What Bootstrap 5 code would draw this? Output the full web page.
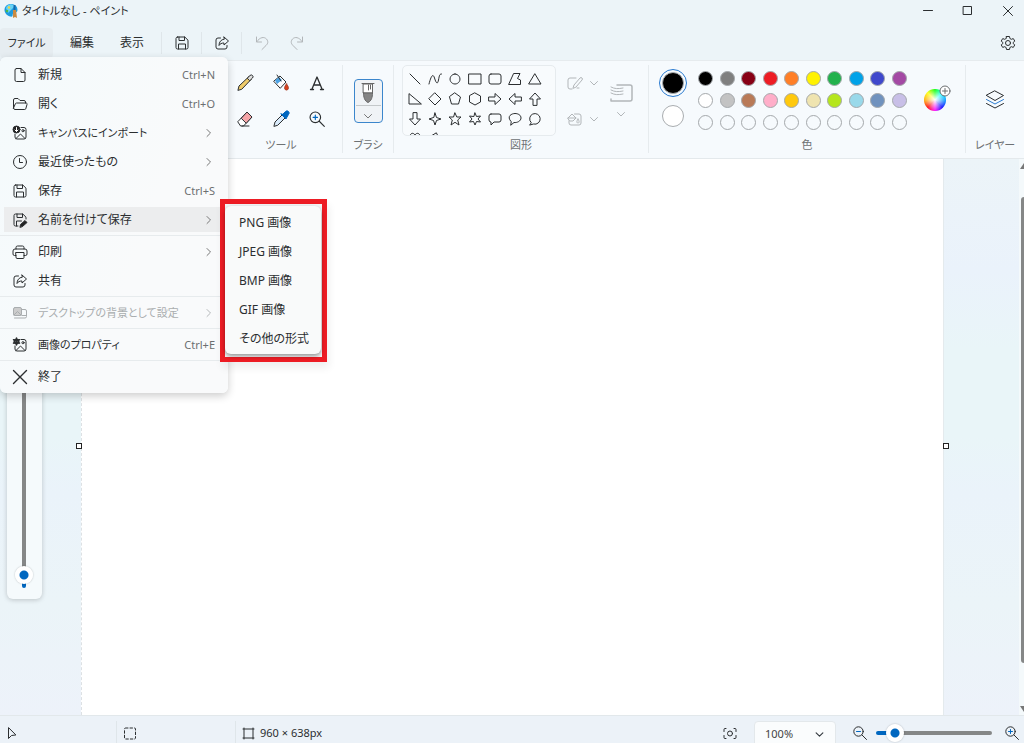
<!DOCTYPE html>
<html lang="ja">
<head>
<meta charset="utf-8">
<meta name="viewport" content="width=device-width, initial-scale=1">
<title>タイトルなし - ペイント</title>
<link href="https://cdn.jsdelivr.net/npm/bootstrap@5.3.0/dist/css/bootstrap.min.css" rel="stylesheet">
<style>
  body { font-family: "Noto Sans", "Noto Sans CJK JP", sans-serif; font-size: 12px; line-height: 16px; color: #2b2e30; background: #ecf4f8; overflow: hidden; }
  body, button, select { font-feature-settings: "palt"; white-space: nowrap; }
  svg { fill: none; stroke: currentColor; stroke-linecap: round; stroke-linejoin: round; flex: none; display: block; }
  .logo { stroke: none; }
  .kana { font-size: 11px; }
  .i16 { width: 16px; height: 16px; }
  .i12 { width: 12px; height: 12px; }
  .plain { border: 0; background: none; padding: 0; color: inherit; display: flex; align-items: center; justify-content: center; }
  .titlebar { height: 22px; }
  .win { width: 32px; height: 22px; }
  .menubar { height: 38px; padding-top: 4px; }
  .menubar .plain { height: 30px; }
  .w-text { width: 50px; }
  .menubar .w-file { width: 53px; background: #e6edf1; border-radius: 4px; }
  .w-icon { width: 39px; }
  .w-undo { width: 32px; }
  .vline { width: 1px; height: 22px; background: #dfe6ea; }
  .ribbon { height: 99px; background: #f6fafd; border-top: 1px solid #e6ebee; border-bottom: 1px solid #e4e9ec; padding-top: 4px; padding-bottom: 5px; }
  .group { border-right: 1px solid #e6ebee; display: flex; flex-direction: column; align-items: center; justify-content: space-between; flex: none; }
  .group-name { color: #6d7174; font-size: 11px; line-height: 16px; }
  .g-image { width: 220px; border: 0; }
  .g-tools { width: 123px; }
  .g-brush { width: 51px; }
  .g-shapes { width: 255px; }
  .g-colors { width: 317px; flex-grow: 1; }
  .color-row { padding-left: 6px; }
  .g-layers { width: 58px; border: 0; }
  .tools { display: grid; grid-template-columns: repeat(3, 36px); grid-auto-rows: 36px; }
  .tools svg { width: 18px; height: 18px; }
  .brush { width: 29px; height: 44px; margin-top: 14px; border: 1px solid #3b86cc; border-radius: 4px; background: #f0f3f6; flex-direction: column; }
  .brush .chev { border-top: 1px solid #c4c8ca; width: 25px; color: #777; }
  .shapes { width: 154px; height: 71px; border: 1px solid #e6ebee; border-radius: 5px; padding: 3px 2px; overflow: hidden; display: grid; grid-template-columns: repeat(7, 20px); grid-auto-rows: 20px; align-content: start; background: #f8fbfd; }
  .outline-tools { margin-left: 10px; }
  .dim { color: #b2b6b9; }
  .ring { width: 28px; height: 28px; border: 1px solid #2a7ad0; border-radius: 50%; }
  .big { width: 22px; height: 22px; border-radius: 50%; border: 1px solid #a9adb0; padding: 0; }
  .palette { display: grid; grid-template-columns: repeat(10, 1fr); grid-auto-rows: 1fr; width: 215px; height: 65px; place-items: center; margin-top: 3px; }
  .swatch { width: 15px; height: 15px; padding: 0; border: 1px solid #a4a8ab; border-radius: 50%; }
  .wheel { width: 22px; height: 22px; margin-left: 14px; border-radius: 50%; background: radial-gradient(#fff, #fff0 75%), conic-gradient(from 90deg, #09f, #00f, #f0f, #f00, #fa0, #ff0, #0f0, #0ff, #09f); }
  .wheel-plus { right: -5px; top: -4px; width: 12px; height: 12px; color: #6a6e70; }
  .workspace { background: linear-gradient(#ecf4f8, #eaf2fb 20%, #e9f5f8 34%, #e9f5f8 50%, #eaf3fa 60%, #ebf4f8 80%, #edf2fa); padding: 0 80px 0 81px; }
  .sheet { background: #fff; border-left: 1px dashed #dde1e4; border-right: 1px solid #e4eaed; height: 100%; }
  .grip { width: 6px; height: 6px; border: 1px solid #222; background: #fff; top: 284px; }
  .grip-l { left: -6px; }
  .grip-r { right: -6px; }
  .side-panel { left: 7px; top: 8px; bottom: 116px; width: 35px; background: #f5fafc; border-radius: 6px; box-shadow: 0 1px 5px #0003; }
  .range { appearance: none; -webkit-appearance: none; height: 20px; padding: 0; margin: 0; background: none; }
  .range::-webkit-slider-runnable-track { height: 4px; border-radius: 2px; background: linear-gradient(90deg, #0067c0 12px, #858787 12px); }
  .range::-webkit-slider-thumb { -webkit-appearance: none; width: 18px; height: 18px; margin-top: -7px; border-radius: 50%; background: radial-gradient(#0067c0 4px, #fff 5px); box-shadow: 0 0 2px #0004; }
  .range-side { width: 400px; left: 27px; bottom: 11px; transform: rotate(-90deg); transform-origin: 0 100%; }
  .range-zoom { width: 116px; height: 24px; }
  .scroll { right: 0; top: 0; bottom: 0; width: 5px; background: #f4f9fb; padding: 4px 0 3px 2px; overflow: hidden; }
  .scroll-thumb { background: #858787; border-radius: 3px 0 0 3px; margin: 28px 0 43px; }
  .arrow { width: 8px; height: 6px; fill: #777; stroke: none; margin-left: -1px; }
  .statusbar { height: 28px; background: #ecf2f8; border-top: 1px solid #e2e8eb; font-size: 11px; padding-top: 5px; overflow: hidden; }
  .statusbar .vline { height: 24px; }
  .cell-a { width: 116px; padding-left: 4px; }
  .cell-b { width: 118px; padding-left: 5px; }
  .zoom-select { width: 82px; height: 26px; font-size: 11px; line-height: 16px; padding: 2px 24px 2px 10px; border: 1px solid #e3e8eb; border-radius: 4px; background-color: #fafcfd; background-size: 9px; background-position: right 11px center; color: #444; }
  .file-menu { left: 0; top: 57px; width: 228px; padding: 3px 0 2px; background: linear-gradient(110deg, #f4fafc, #f9fafb 60%); border-radius: 6px; box-shadow: 0 3px 9px #0003; z-index: 5; }
  .entry { height: 29px; width: 100%; display: flex; align-items: center; padding: 0 13px 0 12px; border: 0; background: none; color: inherit; text-align: left; }
  .entry .i16 { margin-right: 10px; }
  .entry .i12 { margin-left: auto; color: #777; }
  .entry.current { background: linear-gradient(#ecedee, #ecedee) 4px 2px / 221px 25px no-repeat; }
  .entry:disabled { color: #a9adaf; }
  .entry:disabled .i12 { color: #b5b8ba; }
  .key { margin-left: auto; font-size: 11px; color: #6c6f71; }
  .rule { height: 1px; margin: 1px 0; background: #e7ebed; }
  .frame { left: 220px; top: 199px; border: 5px solid #ed1c24; padding: 2px 1px 3px 0; z-index: 6; box-shadow: 2px 6px 8px #0001; background: #f3f5f6; }
  .submenu { width: 96px; background: #f9fafa; border-radius: 6px; box-shadow: 0 2px 4px #0006; padding: 2px 0 1px; }
  .submenu .entry { padding: 0 0 0 14px; }
</style>
</head>
<body class="vh-100 d-flex flex-column position-relative">

<svg class="d-none" aria-hidden="true">
  <symbol id="save" viewBox="0 0 16 16"><path d="M3.500 2h7.300L14 5.200v7.300a1.500 1.500 0 0 1-1.500 1.500h-9A1.500 1.500 0 0 1 2 12.500v-9A1.500 1.500 0 0 1 3.500 2zM5 2v3.500h5.500V2M4.500 14V9h7v5"/></symbol>
  <symbol id="share" viewBox="0 0 16 16"><path d="M6.500 3H4a2 2 0 0 0-2 2v7a2 2 0 0 0 2 2h7a2 2 0 0 0 2-2v-1.500M10 2l4.500 4L10 10V8C7.500 8 6 8.800 5 10.500 5 7 7 4.500 10 4.200z"/></symbol>
  <symbol id="chev-r" viewBox="0 0 12 12"><path d="M4 2.500L7.500 6 4 9.500"/></symbol>
  <symbol id="chev-d" viewBox="0 0 12 12"><path d="M2.500 4.500L6 8l3.500-3.500"/></symbol>
  <symbol id="zoom-in" viewBox="0 0 16 16"><circle cx="6.500" cy="6.500" r="4.700"/><path d="M10 10l4.500 4.500"/><path stroke="#0067c0" d="M4.500 6.500h4M6.500 4.500v4"/></symbol>
  <symbol id="zoom-out" viewBox="0 0 16 16"><circle cx="6.500" cy="6.500" r="4.700"/><path d="M10 10l4.500 4.500"/><path stroke="#0067c0" d="M4.500 6.500h4"/></symbol>
  <symbol id="picture" viewBox="0 0 16 16"><path d="M9 2.500h3A2 2 0 0 1 14 4.500v7.500a2 2 0 0 1-2 2H5a2 2 0 0 1-2-2V9M4 13.500L8.500 9l4.500 4.500"/><circle cx="11" cy="5.700" r="1.100"/></symbol>
</svg>

<header class="titlebar d-flex align-items-center ps-1">
  <svg class="logo" width="14" height="16" viewBox="0 0 14 16"><path fill="#1c9be0" d="M7 1c4 0 6.500 2.500 6.500 6 0 2-1.500 2.500-3 2.500-2 0-1.500 2-2 3.500C8 15 1 12.500.5 7.500.3 3.500 3 1 7 1z"/><path fill="#67d2f5" d="M2 5c2-5 7-4 9-2L4 10z"/><circle cx="3" cy="8" r="1.300" fill="#49b84f"/><circle cx="5" cy="4.500" r="1.200" fill="#f5d53a"/><path fill="#1767a8" d="M9.500 2h2v6h-2z"/><path fill="#c98a42" d="M9 7h3l1 8-2-1-2 1z"/></svg>
  <span class="kana ms-1">タイトルなし - ペイント</span>
  <div class="ms-auto d-flex">
    <button class="plain win" aria-label="最小化"><svg class="i12" viewBox="0 0 12 12"><path d="M1.500 5.500h9"/></svg></button>
    <button class="plain win mx-2" aria-label="最大化"><svg class="i12" viewBox="0 0 12 12"><path d="M1.500 1.500h8v8h-8z"/></svg></button>
    <button class="plain win" aria-label="閉じる"><svg class="i12" viewBox="0 0 12 12"><path d="M1.500 1.500l9 9m0-9l-9 9"/></svg></button>
  </div>
</header>

<nav class="menubar d-flex align-items-center">
  <button class="plain kana w-file">ファイル</button>
  <button class="plain w-text ms-1">編集</button>
  <button class="plain w-text">表示</button>
  <span class="vline ms-1"></span>
  <button class="plain w-icon" aria-label="保存"><svg class="i16"><use href="#save"/></svg></button>
  <span class="vline"></span>
  <button class="plain w-icon" aria-label="共有"><svg class="i16"><use href="#share"/></svg></button>
  <span class="vline"></span>
  <button class="plain w-icon dim" aria-label="元に戻す"><svg class="i16" viewBox="0 0 16 16"><path d="M2.500 2v5h5M2.700 6.800C6 2 10 1.500 12.500 4c2 2.500 1.500 4.500-.5 6.500l-4 4"/></svg></button>
  <button class="plain w-undo dim" aria-label="やり直し"><svg class="i16" viewBox="0 0 16 16"><path d="M13.500 2v5h-5M13.300 6.800C10 2 6 1.500 3.500 4c-2 2.500-1.500 4.500.5 6.500l4 4"/></svg></button>
  <button class="plain ms-auto me-2" aria-label="設定"><svg class="i16" viewBox="0 0 16 16"><path d="M6.500 1.500h3l.4 2 1.400.8 2-.7 1.500 2.500-1.600 1.300v1.200l1.600 1.300-1.500 2.500-2-.7-1.400.8-.4 2h-3l-.4-2-1.400-.8-2 .7L1.200 9.900l1.600-1.300V7.400L1.200 6.100l1.500-2.500 2 .7 1.400-.8z"/><circle cx="8" cy="8" r="2.500"/></svg></button>
</nav>

<section class="ribbon d-flex">
  <div class="group g-image"></div>
  <div class="group g-tools">
    <div class="tools">
      <button class="plain" aria-label="鉛筆"><svg viewBox="0 0 18 18"><path fill="#f0cc6a" d="M2 16l1-4L13 2.500l2.500 2.500L6 15z"/><path fill="#ddd" d="M11.500 4L14 1.500a1.700 1.700 0 0 1 2.500 2.500L14 6.500z"/></svg></button>
      <button class="plain" aria-label="塗りつぶし"><svg viewBox="0 0 18 18"><path fill="#fff" d="M2 7l6-5 6 6-5.500 6z"/><path fill="#4da3e5" stroke="none" d="M3 6.500L7 3l3 3-5 4z"/><path d="M5 1l4 6"/><path fill="#d9431e" stroke="#a6381f" d="M14.500 10c3 3.500 2 6 0 6s-3-2.500 0-6z"/></svg></button>
      <button class="plain" aria-label="テキスト"><svg viewBox="0 0 18 18"><path stroke-width="1.300" d="M4 15L9 3l5 12M6 11h6M2.500 15.500h3M12.500 15.500h3"/></svg></button>
      <button class="plain" aria-label="消しゴム"><svg viewBox="0 0 18 18"><path fill="#fff" d="M2 11.500L11 2l5 5-8.500 9H5z"/><path fill="#f5a5a8" d="M5.500 8L11 2l5 5-5.500 6z"/><path d="M6 16h7"/></svg></button>
      <button class="plain" aria-label="色の選択"><svg viewBox="0 0 18 18"><path fill="#d9eafa" d="M2 16l1-4 7-7 3 3-7 7z"/><path fill="#0067c0" stroke="#0067c0" d="M9 4l5 5 1-2 1.500-2.500A2 2 0 0 0 13.500 1.500L11 4z"/></svg></button>
      <button class="plain" aria-label="拡大鏡"><svg><use href="#zoom-in"/></svg></button>
    </div>
    <span class="group-name">ツール</span>
  </div>
  <div class="group g-brush">
    <button class="plain brush" aria-label="ブラシ">
      <svg width="18" height="24" viewBox="0 0 18 24"><g stroke="#666"><path fill="#fff" d="M4.500 3h9v9h-9z"/><path d="M3 2.500h12M9.500 4v5M11.500 4v4"/><path fill="#858585" d="M4.500 12h9c0 4-1 8-4.500 9.500C5.500 20 4.500 16 4.500 12z"/></g></svg>
      <span class="chev d-flex justify-content-center pt-1"><svg class="i12"><use href="#chev-d"/></svg></span>
    </button>
    <span class="group-name">ブラシ</span>
  </div>
  <div class="group g-shapes">
    <div class="d-flex w-100 ps-2">
      <div class="shapes" id="shapes"></div>
      <div class="outline-tools d-flex flex-column dim">
        <button class="plain pt-2" aria-label="輪郭"><svg width="18" height="20" viewBox="0 0 18 20"><path d="M10 5H4a2 2 0 0 0-2 2v7a2 2 0 0 0 2 2h2M7 15l1-3 6-7a1.400 1.400 0 0 1 2 2l-6 7zM11 15h2"/></svg><svg class="i12 ms-1"><use href="#chev-d"/></svg></button>
        <button class="plain pt-3" aria-label="塗りつぶし"><svg width="18" height="20" viewBox="0 0 18 20"><path d="M8.500 5H13a2 2 0 0 1 2 2v7a2 2 0 0 1-2 2H5a2 2 0 0 1-2-2v-2M2 9l4-4 4 4-3 3H4zM2 9h8M12 10c2 3 1 4 0 4s-2-1 0-4"/></svg><svg class="i12 ms-1"><use href="#chev-d"/></svg></button>
      </div>
      <button class="plain dim flex-column ms-2" aria-label="サイズ"><svg width="26" height="22" viewBox="0 0 26 22"><path stroke-width="1.500" d="M9 3h13a2 2 0 0 1 2 2v12a2 2 0 0 1-2 2H3v-2"/><path d="M3 5c4 2 7 2 12 1M3 8c4 2 7 2 12 1M3 11c4 2 7 2 12 1"/></svg><svg class="i12 mt-1"><use href="#chev-d"/></svg></button>
    </div>
    <span class="group-name">図形</span>
  </div>
  <div class="group g-colors">
    <div class="color-row d-flex w-100">
      <div class="d-flex flex-column align-items-center gap-2 mx-1 pt-1">
        <span class="ring d-flex align-items-center justify-content-center"><button class="big bg-black" aria-label="色 1"></button></span>
        <button class="big bg-white" aria-label="色 2"></button>
      </div>
      <div class="palette ms-1" id="palette"></div>
      <button class="plain wheel position-relative mt-4" aria-label="色の編集"><svg class="wheel-plus position-absolute" viewBox="0 0 12 12"><circle cx="6" cy="6" r="5" fill="#fff"/><path d="M6 3.500v5M3.500 6h5"/></svg></button>
    </div>
    <span class="group-name">色</span>
  </div>
  <div class="group g-layers">
    <button class="plain mt-4" aria-label="レイヤー"><svg width="20" height="22" viewBox="0 0 20 22"><path d="M10 2l8.500 4.500L10 11.500 1.500 6.500z"/><path stroke="#2a7ad0" d="M1.500 10.500L10 15l8.500-4.500"/><path d="M1.500 14.500L10 19l8.500-4.500"/></svg></button>
    <span class="group-name">レイヤー</span>
  </div>
</section>

<main class="workspace flex-grow-1 position-relative">
  <div class="sheet position-relative">
    <span class="grip grip-l position-absolute"></span>
    <span class="grip grip-r position-absolute"></span>
  </div>
  <div class="side-panel position-absolute"><input class="range range-side position-absolute" type="range" min="0" max="100" value="1" aria-label="ブラシのサイズ"></div>
  <div class="scroll position-absolute d-flex flex-column">
    <svg class="arrow" viewBox="0 0 8 6"><path d="M4 0l4 6H0z"/></svg>
    <div class="scroll-thumb flex-grow-1"></div>
    <svg class="arrow" viewBox="0 0 8 6"><path d="M4 6l4-6H0z"/></svg>
  </div>
</main>

<footer class="statusbar d-flex align-items-start">
  <div class="cell-a pt-1"><svg class="i16" viewBox="0 0 16 16"><path d="M4.500 3v10.500L7.500 10.500 11.500 10z"/></svg></div>
  <span class="vline"></span>
  <div class="cell-b pt-1"><svg class="i16" viewBox="0 0 16 16"><rect x="2.500" y="3" width="11" height="11" rx="1" stroke-dasharray="2.500 2"/></svg></div>
  <span class="vline"></span>
  <div class="d-flex gap-1 pt-1 ms-1"><svg class="i16" viewBox="0 0 16 16"><path d="M4 3v11M13 3v11M3 4h11M3 13h11"/></svg><span>960 × 638px</span></div>
  <div class="ms-auto d-flex align-items-start">
    <button class="plain pt-1 me-3" aria-label="画面に合わせる"><svg class="i16" viewBox="0 0 16 16"><circle cx="8" cy="8.500" r="2.500"/><path d="M4 3.500H3a1 1 0 0 0-1 1v2M12 3.500h1a1 1 0 0 1 1 1v2M4 13.500H3a1 1 0 0 1-1-1v-2M12 13.500h1a1 1 0 0 0 1-1v-2"/></svg></button>
    <select class="form-select zoom-select" aria-label="ズーム"><option>100%</option></select>
    <button class="plain pt-1 ms-3" aria-label="縮小"><svg class="i16"><use href="#zoom-out"/></svg></button>
    <input class="range range-zoom mx-2" type="range" min="0" max="100" value="10" aria-label="ズーム倍率">
    <button class="plain pt-1 me-1 ms-1" aria-label="拡大"><svg class="i16"><use href="#zoom-in"/></svg></button>
  </div>
</footer>

<div class="file-menu position-absolute">
  <button class="entry"><svg class="i16" viewBox="0 0 16 16"><path d="M4.500 1.500H9L13 5.500v7.500a1.500 1.500 0 0 1-1.500 1.500h-7A1.500 1.500 0 0 1 3 13V3a1.500 1.500 0 0 1 1.500-1.500zM9 1.500v4h4"/></svg>新規<span class="key">Ctrl+N</span></button>
  <button class="entry"><svg class="i16" viewBox="0 0 16 16"><path d="M1.500 12V4a1.500 1.500 0 0 1 1.500-1.500h3L8 4.500h4A1.500 1.500 0 0 1 13.500 6v1M1.500 12l2-4.500a1 1 0 0 1 1-.500H14a1 1 0 0 1 1 1.500L13.700 13a1 1 0 0 1-1 .500H3A1.500 1.500 0 0 1 1.500 12z"/></svg>開く<span class="key">Ctrl+O</span></button>
  <button class="entry kana"><svg class="i16" viewBox="0 0 16 16"><use href="#picture"/><circle cx="4.500" cy="4.500" r="3.500" fill="#222"/><path stroke="#fff" d="M4.500 2.500v4M3 5l1.500 1.500L6 5"/></svg>キャンバスにインポート<svg class="i12"><use href="#chev-r"/></svg></button>
  <button class="entry"><svg class="i16" viewBox="0 0 16 16"><circle cx="8" cy="8" r="6.500"/><path d="M7.500 4.500v4h3"/></svg>最近使ったもの<svg class="i12"><use href="#chev-r"/></svg></button>
  <button class="entry"><svg class="i16"><use href="#save"/></svg>保存<span class="key">Ctrl+S</span></button>
  <button class="entry current"><svg class="i16" viewBox="0 0 16 16"><path d="M6 14H3.500A1.500 1.500 0 0 1 2 12.500v-9A1.500 1.500 0 0 1 3.500 2h7.300L14 5.200V7M5 2v3.500h5.500V2M4.500 14V9h5"/><path fill="#222" d="M8 15l.5-2.500 4.500-4 2 2-4.500 4z"/></svg>名前を付けて保存<svg class="i12"><use href="#chev-r"/></svg></button>
  <div class="rule"></div>
  <button class="entry"><svg class="i16" viewBox="0 0 16 16"><path d="M4 11.500H2.500a1.500 1.500 0 0 1-1.500-1.500V7a2 2 0 0 1 2-2h10a2 2 0 0 1 2 2v3a1.500 1.500 0 0 1-1.500 1.500H12M4 5V3.500A1.500 1.500 0 0 1 5.500 2h5A1.500 1.500 0 0 1 12 3.500V5M4 8.500h8v5a1 1 0 0 1-1 1H5a1 1 0 0 1-1-1z"/></svg>印刷<svg class="i12"><use href="#chev-r"/></svg></button>
  <button class="entry"><svg class="i16"><use href="#share"/></svg>共有</button>
  <div class="rule"></div>
  <button class="entry kana" disabled><svg class="i16" viewBox="0 0 16 16"><rect x="1.500" y="2.500" width="8" height="8" rx="1.500" fill="#ccc"/><path d="M2 10l3.500-3.500L9 10M10 4.500h3A1.500 1.500 0 0 1 14.500 6v5.500A1.500 1.500 0 0 1 13 13H2.500M10 10.500h4"/></svg>デスクトップの背景として設定<svg class="i12"><use href="#chev-r"/></svg></button>
  <div class="rule"></div>
  <button class="entry kana"><svg class="i16" viewBox="0 0 16 16"><use href="#picture"/><circle cx="4.500" cy="4.500" r="2" stroke-width="2"/><path stroke-width="1.500" d="M4.500 1v7M1.500 2.700l6 3.500M7.500 2.700l-6 3.500"/></svg>画像のプロパティ<span class="key">Ctrl+E</span></button>
  <div class="rule"></div>
  <button class="entry"><svg class="i16" viewBox="0 0 16 16"><path stroke-width="1.400" d="M1.500 1.500l13 13m0-13l-13 13"/></svg>終了</button>
</div>

<div class="frame position-absolute">
  <div class="submenu">
    <button class="entry">PNG 画像</button>
    <button class="entry">JPEG 画像</button>
    <button class="entry">BMP 画像</button>
    <button class="entry">GIF 画像</button>
    <button class="entry">その他の形式</button>
  </div>
</div>

<script src="https://cdn.jsdelivr.net/npm/bootstrap@5.3.0/dist/js/bootstrap.bundle.min.js"></script>
<script>
  const colors = ["#000", "#7f7f7f", "#880015", "#ed1c24", "#ff7f27", "#fff200", "#22b14c", "#00a2e8", "#3f48cc", "#a349a4",
    "#fff", "#c3c3c3", "#b97a57", "#ffaec9", "#ffc90e", "#efe4b0", "#b5e61d", "#99d9ea", "#7092be", "#c8bfe7"];
  const palette = document.getElementById("palette");
  for (let i = 0; i < 30; i++) {
    const b = document.createElement("button");
    b.className = "swatch";
    b.setAttribute("aria-label", colors[i] || "空き");
    b.style.backgroundColor = colors[i] || "transparent";
    palette.append(b);
  }
  const shapes = [
    "M3 3l10 10", "M2 13C4 5 6 2 7.500 7s3 7 4 2 1-6 3-6", "M8 3a5 5 0 1 0 .01 0z", "M2 3h12v10H2z",
    "M4 3h8a2 2 0 0 1 2 2v6a2 2 0 0 1-2 2H4a2 2 0 0 1-2-2V5a2 2 0 0 1 2-2z", "M7 2.500h6l-2.500 5 3 1.500v4.500H2z", "M8 3l6 10H2z",
    "M2 3v10h12z", "M8 2l6 6-6 6-6-6z", "M8 2l5.500 4-2 7h-7l-2-7z", "M8 2l5.500 3v6L8 14l-5.500-3V5z",
    "M2 6h6V2.500L14 8l-6 5.500V10H2z", "M14 6H8V2.500L2 8l6 5.500V10h6z", "M6 14V8H2.500L8 2l5.500 6H10v6z",
    "M6 2v6H2.500L8 14l5.500-6H10V2z", "M8 2l1.500 4.500L14 8 9.500 9.500 8 14 6.500 9.500 2 8l4.500-1.500z",
    "M8 2l1.800 4H14l-3.300 3 1.300 5-4-2.700L4 14l1.300-5L2 6h4.200z", "M8 2l1.500 3.500 4-.5L11 8l2.500 3-4-.5L8 14l-1.500-3.500-4 .5L5 8 2.500 5l4 .5z",
    "M4 3h8a2 2 0 0 1 2 2v4a2 2 0 0 1-2 2H7l-3 3v-3a2 2 0 0 1-2-2V5a2 2 0 0 1 2-2z",
    "M4 10.500C-1 5 5 2.500 8 2.500s6 1.500 6 4.500-4 5-7 4.500L4 14z", "M4 11.500a5.300 5.300 0 1 1 2.500 1.500L3 14z",
    "M8 14C-2 6 5-1 8 4c3-5 10 2 0 10z", "M9 2L4 5l3 2-2 2 8 5-3-5 2-1z"
  ];
  document.getElementById("shapes").innerHTML = shapes.map(d =>
    `<button class="plain" aria-label="図形"><svg class="i16" viewBox="0 0 16 16"><path d="${d}"/></svg></button>`).join("");
</script>
</body>
</html>
